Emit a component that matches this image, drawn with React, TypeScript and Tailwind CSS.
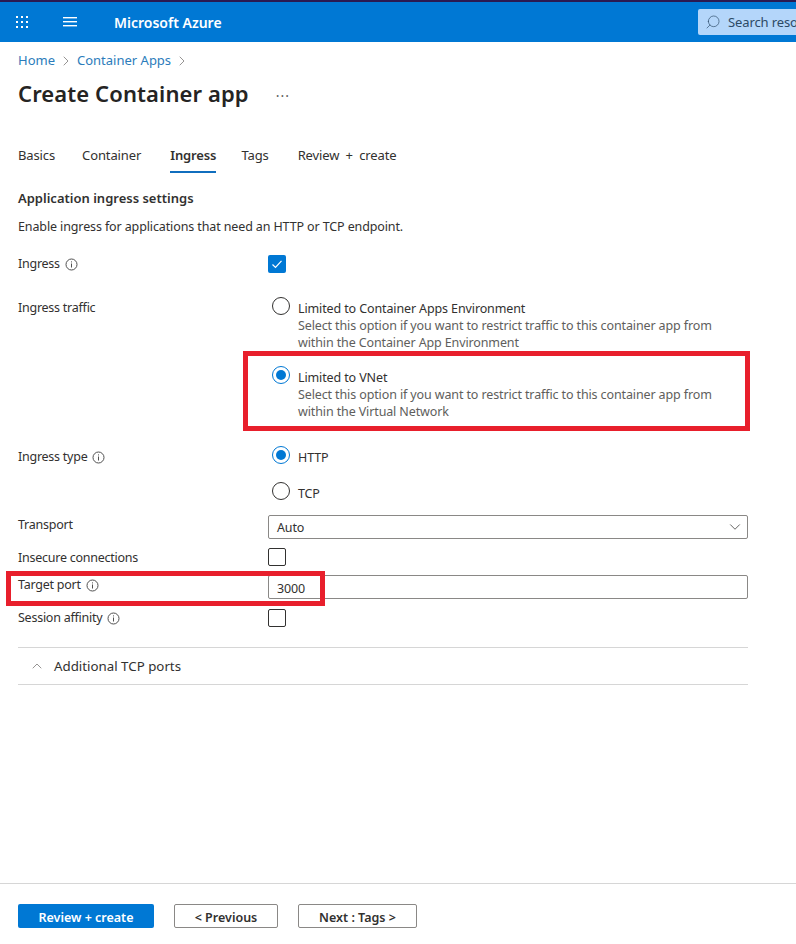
import type { ReactNode } from 'react'
import { ChevronDown, ChevronRight, ChevronUp, Search } from 'lucide-react'

const tabs = ['Basics', 'Container', 'Ingress', 'Tags', 'Review + create']

function InfoIcon() {
  return (
    <svg width="13" height="13" viewBox="0 0 13 13" fill="none" className="shrink-0">
      <circle cx="6.5" cy="6.5" r="5.5" stroke="#505050" strokeWidth="1" />
      <rect x="6" y="5.5" width="1" height="4" fill="#505050" />
      <rect x="6" y="3.4" width="1" height="1" fill="#505050" />
    </svg>
  )
}

function Label({ text, info }: { text: string; info?: boolean }) {
  return (
    <div className="flex w-[250px] shrink-0 items-center gap-[5px] tracking-[-0.25px] text-[#323130]">
      <span>{text}</span>
      {info && <InfoIcon />}
    </div>
  )
}

function Row({ className, children }: { className: string; children: ReactNode }) {
  return <div className={`flex ${className}`}>{children}</div>
}

function Checkbox({ checked }: { checked?: boolean }) {
  if (checked) {
    return (
      <div className="flex h-[18px] w-[18px] items-center justify-center rounded-[2px] bg-[#0078d4]">
        <svg width="12" height="12" viewBox="0 0 12 12" fill="none">
          <path d="M1.5 6.5 L4.5 9.4 L10.5 2.8" stroke="white" strokeWidth="1.2" />
        </svg>
      </div>
    )
  }
  return <div className="h-[18px] w-[18px] rounded-[2px] border border-[#323130]" />
}

function Radio({ checked }: { checked?: boolean }) {
  return (
    <div
      className={`flex h-[18px] w-[18px] shrink-0 items-center justify-center rounded-full border ${
        checked ? 'border-[#0078d4]' : 'border-[#323130]'
      }`}
    >
      {checked && <div className="h-[10px] w-[10px] rounded-full bg-[#0078d4]" />}
    </div>
  )
}

function RadioOption({ title, lines, checked }: { title: string; lines: string[]; checked?: boolean }) {
  return (
    <div className="flex pl-[4px]">
      <Radio checked={checked} />
      <div className="ml-[8px] pt-[3px] leading-[17px]">
        <div className="text-[#323130]">{title}</div>
        {lines.map((line) => (
          <div key={line} className="text-[#605e5c]">
            {line}
          </div>
        ))}
      </div>
    </div>
  )
}

function Field({ children }: { children: ReactNode }) {
  return (
    <div className="flex h-[24px] w-[480px] items-center justify-between rounded-[2px] border border-[#8a8886] pl-[8px] pr-[3px] text-[#323130]">
      {children}
    </div>
  )
}

export default function App() {
  return (
    <div className="relative flex h-[944px] w-[796px] flex-col overflow-hidden bg-white font-['Noto_Sans',sans-serif] text-[12.5px] tracking-[-0.12px]">
      <header className="flex h-[42px] shrink-0 items-center border-t-2 border-[#2a1a52] bg-[#0078d4] text-white">
        <svg width="14" height="14" viewBox="0 0 14 14" fill="white" className="ml-[15px]">
          {[1, 6, 11].map((y) =>
            [1, 6, 11].map((x) => <rect key={`${x}-${y}`} x={x} y={y} width="2" height="2" />),
          )}
        </svg>
        <svg width="14" height="12" viewBox="0 0 14 12" fill="white" className="ml-[34px]">
          <rect y="1" width="14" height="1.4" />
          <rect y="5" width="14" height="1.4" />
          <rect y="9" width="14" height="1.4" />
        </svg>
        <div className="ml-[37px] text-[14px] font-semibold tracking-normal">Microsoft Azure</div>
        <div className="ml-auto flex h-[26px] w-[98px] items-center gap-[7px] overflow-hidden rounded-l-[2px] bg-[#b4d6fa] pl-[7px] text-[13px] whitespace-nowrap text-[#2c4a66]">
          <Search size={16} strokeWidth={1} className="shrink-0 -scale-x-100" />
          <span className="pt-[1px]">Search resou</span>
        </div>
      </header>

      <main className="flex-1 px-[18px]">
        <nav className="mt-[10px] flex h-[18px] items-center text-[13px] tracking-normal text-[#2b7cbb]">
          <span>Home</span>
          <ChevronRight size={16} strokeWidth={1} className="mx-[3px] text-[#605e5c]" />
          <span>Container Apps</span>
          <ChevronRight size={16} strokeWidth={1} className="ml-[3px] text-[#605e5c]" />
        </nav>

        <div className="mt-[7px] flex h-[32px] items-center">
          <h1 className="text-[22px] font-semibold tracking-[0.1px] text-[#252423]">Create Container app</h1>
          <span className="ml-[27px] mt-[4px] text-[14px] tracking-[1px] text-[#605e5c]">···</span>
        </div>

        <div className="mt-[35px] flex h-[29px] items-start text-[13px]">
          {tabs.map((tab, i) => (
            <div
              key={tab}
              className={`h-full pt-[2px] ${['mr-[27px]', 'mr-[29px]', 'mr-[25px]', 'mr-[29px]', '[word-spacing:3px]'][i]} ${
                tab === 'Ingress'
                  ? 'border-b-2 border-[#106ebe] font-semibold text-[#323130]'
                  : 'text-[#323130]'
              }`}
            >
              {tab}
            </div>
          ))}
        </div>

        <h2 className="mt-[16px] h-[18px] text-[13px] font-semibold leading-[18px] tracking-normal text-[#323130]">
          Application ingress settings
        </h2>
        <p className="mt-[11px] h-[18px] leading-[18px] text-[#323130]">
          Enable ingress for applications that need an HTTP or TCP endpoint.
        </p>

        <Row className="mt-[19px] h-[18px]">
          <Label text="Ingress" info />
          <Checkbox checked />
        </Row>

        <Row className="mt-[24px]">
          <div className="h-[18px] w-[250px] shrink-0 pt-[2px]">
            <Label text="Ingress traffic" />
          </div>
          <div className="flex flex-col gap-[15px]">
            <RadioOption
              title="Limited to Container Apps Environment"
              lines={[
                'Select this option if you want to restrict traffic to this container app from',
                'within the Container App Environment',
              ]}
            />
            <RadioOption
              checked
              title="Limited to VNet"
              lines={[
                'Select this option if you want to restrict traffic to this container app from',
                'within the Virtual Network',
              ]}
            />
          </div>
        </Row>

        <Row className="mt-[26px]">
          <div className="h-[18px] w-[250px] shrink-0 pt-[2px]">
            <Label text="Ingress type" info />
          </div>
          <div className="flex flex-col gap-[18px] pl-[4px]">
            <div className="flex h-[18px] items-center gap-[8px] text-[#323130]">
              <Radio checked />
              <span className="pt-[6px]">HTTP</span>
            </div>
            <div className="flex h-[18px] items-center gap-[8px] text-[#323130]">
              <Radio />
              <span className="pt-[6px]">TCP</span>
            </div>
          </div>
        </Row>

        <Row className="mt-[15px] h-[24px]">
          <div className="h-[18px] pt-[1px]">
            <Label text="Transport" />
          </div>
          <Field>
            <span className="pt-[2px]">Auto</span>
            <ChevronDown size={18} strokeWidth={1} className="text-[#323130]" />
          </Field>
        </Row>

        <Row className="mt-[9px] h-[18px]">
          <div className="pt-[1px]">
            <Label text="Insecure connections" />
          </div>
          <Checkbox />
        </Row>

        <Row className="mt-[9px] h-[24px]">
          <div className="h-[18px] pt-[1px]">
            <Label text="Target port" info />
          </div>
          <Field>
            <span className="pt-[4px]">3000</span>
          </Field>
        </Row>

        <Row className="mt-[10px] h-[18px]">
          <Label text="Session affinity" info />
          <Checkbox />
        </Row>

        <div className="mt-[20px] flex h-[38px] w-[730px] items-center border-y border-[#d6d6d6] pl-[11px] text-[13.3px] tracking-normal text-[#323130]">
          <ChevronUp size={16} strokeWidth={1} className="text-[#605e5c]" />
          <span className="ml-[9px] pt-[2px]">Additional TCP ports</span>
        </div>
      </main>

      <footer className="flex h-[61px] shrink-0 items-start gap-[20px] border-t border-[#d6d6d6] pl-[18px] pt-[20px] text-[12.5px] font-semibold tracking-normal">
        <button className="h-[24px] w-[136px] rounded-[2px] bg-[#0078d4] pt-[4px] text-white">Review + create</button>
        <button className="h-[24px] w-[104px] rounded-[2px] border border-[#8a8886] pt-[4px] text-[#323130]">{'< Previous'}</button>
        <button className="h-[24px] w-[119px] rounded-[2px] border border-[#8a8886] pt-[4px] text-[#323130]">{'Next : Tags >'}</button>
      </footer>

      {/* red annotations drawn over the screenshot */}
      <div className="absolute left-[243px] top-[351px] h-[80px] w-[507px] border-[5px] border-[#e81f2c]" />
      <div className="absolute left-[6px] top-[571px] h-[35px] w-[319px] border-[5px] border-[#e81f2c]" />
    </div>
  )
}
